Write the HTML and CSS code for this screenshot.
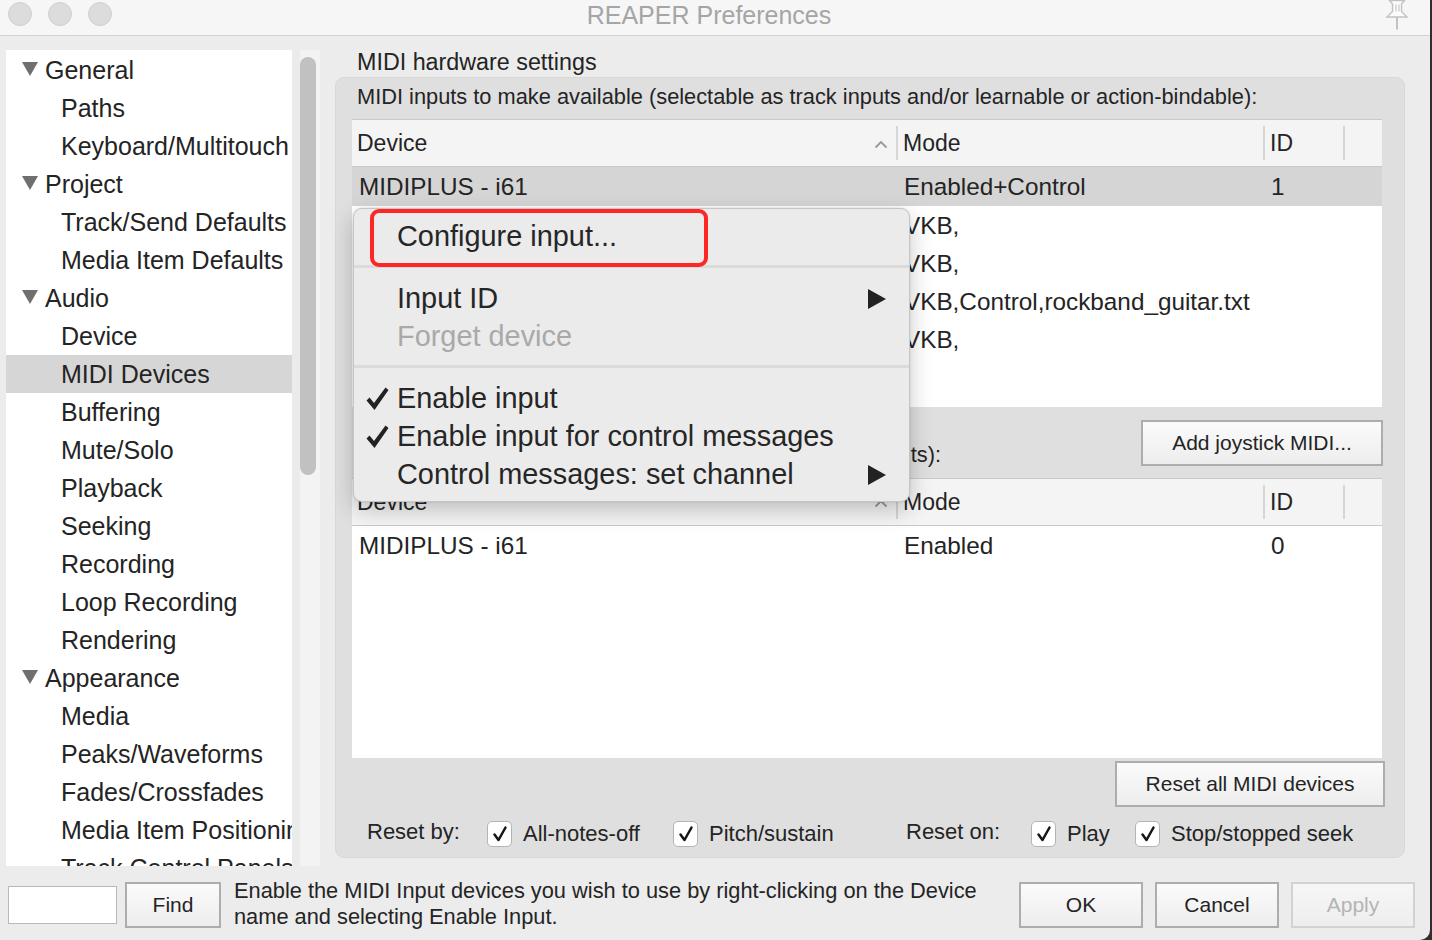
FILE: index.html
```html
<!DOCTYPE html>
<html>
<head>
<meta charset="utf-8">
<title>REAPER Preferences</title>
<link rel="stylesheet" href="styles.css">
</head>
<body>
<div class="window">
  <div class="titlebar">
    <div class="lights"><span class="light"></span><span class="light"></span><span class="light"></span></div>
    <div class="title">REAPER Preferences</div>
    <div class="pin">
      <svg width="30" height="30" viewBox="0 0 30 30"><path d="M7.5 0.5 H22.5 L19.5 4 V11.5 L25 17 H5 L10.5 11.5 V4 Z" fill="#fbfbfb" stroke="#c2c2c2" stroke-width="1.4"/><path d="M14 4.5 V11.5 M17 4.5 V11.5" stroke="#d0d0d0" stroke-width="1.4"/><path d="M15 17 V29.5" stroke="#c2c2c2" stroke-width="2"/></svg>
    </div>
  </div>

  <div class="main">
    <div class="sidebar">
      <div class="tree">
        <div class="node parent"><span class="tri"></span>General</div>
        <div class="node">Paths</div>
        <div class="node">Keyboard/Multitouch</div>
        <div class="node parent"><span class="tri"></span>Project</div>
        <div class="node">Track/Send Defaults</div>
        <div class="node">Media Item Defaults</div>
        <div class="node parent"><span class="tri"></span>Audio</div>
        <div class="node">Device</div>
        <div class="node selected">MIDI Devices</div>
        <div class="node">Buffering</div>
        <div class="node">Mute/Solo</div>
        <div class="node">Playback</div>
        <div class="node">Seeking</div>
        <div class="node">Recording</div>
        <div class="node">Loop Recording</div>
        <div class="node">Rendering</div>
        <div class="node parent"><span class="tri"></span>Appearance</div>
        <div class="node">Media</div>
        <div class="node">Peaks/Waveforms</div>
        <div class="node">Fades/Crossfades</div>
        <div class="node">Media Item Positioning</div>
        <div class="node">Track Control Panels</div>
      </div>
      <div class="scrolltrack"><div class="thumb"></div></div>
    </div>

    <div class="content">
      <div class="section-title">MIDI hardware settings</div>
      <div class="group">
        <div class="label first">MIDI inputs to make available (selectable as track inputs and/or learnable or action-bindable):</div>
        <div class="table t1">
          <div class="thead">
            <div class="th dev">Device<svg class="caret" width="14" height="9" viewBox="0 0 14 9"><path d="M1.5 7.5 L7 2 L12.5 7.5" fill="none" stroke="#9a9a9a" stroke-width="1.8"/></svg></div>
            <div class="th sep">Mode</div>
            <div class="th sep">ID</div>
            <div class="th sep"></div>
          </div>
          <div class="tr sel"><div class="td">MIDIPLUS - i61</div><div class="td">Enabled+Control</div><div class="td">1</div><div class="td"></div></div>
          <div class="tr"><div class="td"></div><div class="td">VKB,</div><div class="td"></div><div class="td"></div></div>
          <div class="tr"><div class="td"></div><div class="td">VKB,</div><div class="td"></div><div class="td"></div></div>
          <div class="tr"><div class="td"></div><div class="td">VKB,Control,rockband_guitar.txt</div><div class="td"></div><div class="td"></div></div>
          <div class="tr"><div class="td"></div><div class="td">VKB,</div><div class="td"></div><div class="td"></div></div>
        </div>
        <div class="midrow">
          <div class="label">MIDI outputs to make available (selectable as track outputs):</div>
          <button class="btn joy">Add joystick MIDI...</button>
        </div>
        <div class="table t2">
          <div class="thead">
            <div class="th dev">Device<svg class="caret" width="14" height="9" viewBox="0 0 14 9"><path d="M1.5 7.5 L7 2 L12.5 7.5" fill="none" stroke="#9a9a9a" stroke-width="1.8"/></svg></div>
            <div class="th sep">Mode</div>
            <div class="th sep">ID</div>
            <div class="th sep"></div>
          </div>
          <div class="tr"><div class="td">MIDIPLUS - i61</div><div class="td">Enabled</div><div class="td">0</div><div class="td"></div></div>
        </div>
        <div class="resetrow"><button class="btn resetall">Reset all MIDI devices</button></div>
        <div class="checks">
          <span class="clabel by">Reset by:</span>
          <label class="chk w1"><span class="box"><svg width="18" height="18" viewBox="0 0 18 18"><path d="M3.5 9.5 L7.5 15 L14.5 2.5" fill="none" stroke="#151515" stroke-width="2.5" stroke-linejoin="round" stroke-linecap="round"/></svg></span>All-notes-off</label>
          <label class="chk w2"><span class="box"><svg width="18" height="18" viewBox="0 0 18 18"><path d="M3.5 9.5 L7.5 15 L14.5 2.5" fill="none" stroke="#151515" stroke-width="2.5" stroke-linejoin="round" stroke-linecap="round"/></svg></span>Pitch/sustain</label>
          <span class="clabel on">Reset on:</span>
          <label class="chk w3"><span class="box"><svg width="18" height="18" viewBox="0 0 18 18"><path d="M3.5 9.5 L7.5 15 L14.5 2.5" fill="none" stroke="#151515" stroke-width="2.5" stroke-linejoin="round" stroke-linecap="round"/></svg></span>Play</label>
          <label class="chk"><span class="box"><svg width="18" height="18" viewBox="0 0 18 18"><path d="M3.5 9.5 L7.5 15 L14.5 2.5" fill="none" stroke="#151515" stroke-width="2.5" stroke-linejoin="round" stroke-linecap="round"/></svg></span>Stop/stopped seek</label>
        </div>
      </div>
    </div>
  </div>

  <div class="bottombar">
    <input class="search" type="text">
    <button class="btn find">Find</button>
    <div class="help">Enable the MIDI Input devices you wish to use by right-clicking on the Device<br>name and selecting Enable Input.</div>
    <div class="actions">
      <button class="btn act">OK</button>
      <button class="btn act">Cancel</button>
      <button class="btn act disabled">Apply</button>
    </div>
  </div>

  <div class="menu">
    <div class="hl"></div>
    <div class="mi"><span class="mcheck"></span><span class="mtext">Configure input...</span></div>
    <div class="msep"></div>
    <div class="mi"><span class="mcheck"></span><span class="mtext">Input ID</span><svg class="arrow" width="18" height="20" viewBox="0 0 18 20"><path d="M0 0 L18 10 L0 20 Z" fill="#222"/></svg></div>
    <div class="mi dis"><span class="mcheck"></span><span class="mtext">Forget device</span></div>
    <div class="msep"></div>
    <div class="mi"><span class="mcheck"><svg width="23" height="24" viewBox="0 0 23 24"><path d="M0.5 13.5 L3.5 10.5 L8 16 L19.5 0.5 L22.5 3 L8.5 23 Z" fill="#222"/></svg></span><span class="mtext">Enable input</span></div>
    <div class="mi"><span class="mcheck"><svg width="23" height="24" viewBox="0 0 23 24"><path d="M0.5 13.5 L3.5 10.5 L8 16 L19.5 0.5 L22.5 3 L8.5 23 Z" fill="#222"/></svg></span><span class="mtext">Enable input for control messages</span></div>
    <div class="mi"><span class="mcheck"></span><span class="mtext">Control messages: set channel</span><svg class="arrow" width="18" height="20" viewBox="0 0 18 20"><path d="M0 0 L18 10 L0 20 Z" fill="#222"/></svg></div>
  </div>
</div>
</body>
</html>
```

FILE: styles.css
```css
* { box-sizing: border-box; }
html, body { margin: 0; padding: 0; }
body {
  width: 1432px;
  height: 940px;
  overflow: hidden;
  background: #2e2e2e;
  font-family: "Liberation Sans", Arial, sans-serif;
  color: #242424;
}
.window {
  position: relative;
  width: 1430px;
  height: 940px;
  background: #ececec;
  display: flex;
  flex-direction: column;
  border-bottom-right-radius: 10px;
  overflow: hidden;
}

/* title bar */
.titlebar {
  height: 36px;
  flex: none;
  background: #f6f6f6;
  border-bottom: 1px solid #d2d2d2;
  display: grid;
  grid-template-columns: 1fr auto 1fr;
  align-items: start;
}
.lights { display: flex; gap: 16px; padding: 2px 0 0 8px; }
.light {
  width: 24px; height: 24px; border-radius: 50%;
  background: #dcdcdc; border: 1px solid #cfcfcf;
}
.title {
  font-size: 25px; line-height: 30px; color: #a5a5a5;
  padding-right: 12px;
}
.pin { justify-self: end; padding-right: 18px; height: 30px; }
.pin svg { display: block; }

/* main */
.main {
  height: 834px;
  flex: none;
  display: flex;
  padding: 14px 0 0 6px;
}
.sidebar { display: flex; height: 816px; width: 314px; flex: none; }
.tree {
  width: 286px;
  height: 816px;
  background: #fff;
  overflow: hidden;
  padding-top: 1px;
}
.node {
  height: 38px;
  line-height: 39px;
  font-size: 25px;
  padding-left: 55px;
  padding-right: 3px;
  white-space: nowrap;
  overflow: hidden;
  color: #242424;
}
.node.parent { padding-left: 16px; display: flex; align-items: center; }
.node.selected { background: #d6d6d6; }
.tri {
  width: 0; height: 0;
  border-left: 8px solid transparent;
  border-right: 8px solid transparent;
  border-top: 14px solid #6f6f6f;
  margin-right: 7px;
  margin-top: -3px;
}
.scrolltrack {
  width: 28px; height: 816px;
  background: linear-gradient(90deg, #ebebeb 0 8px, #f3f3f3 8px);
  padding: 7px 4px 0 8px;
}
.thumb {
  width: 16px; height: 418px;
  background: #c1c1c1;
  border-radius: 8px;
}

.content { margin-left: 15px; width: 1070px; }
.section-title { font-size: 23.3px; line-height: 25px; padding-left: 22px; height: 24px; }
.group {
  margin-top: 3px;
  height: 781px;
  background: #dfdfdf;
  border: 1px solid #d8d8d8;
  border-radius: 9px;
  padding: 8px 22px 0 16px;
}
.label { font-size: 21.8px; line-height: 22px; padding-left: 5px; white-space: nowrap; }
.label.first { margin-bottom: 11px; }

.table {
  background: #fff;
  border-top: 1px solid #c9c9c9;
  overflow: hidden;
}
.t1 { height: 288px; }
.t2 { height: 280px; }
.thead {
  height: 47px;
  display: grid;
  grid-template-columns: 544px 367px 80px 1fr;
  background: #f4f4f4;
  border-bottom: 1px solid #c9c9c9;
}
.th {
  font-size: 23px;
  line-height: 46px;
  padding-left: 6px;
  white-space: nowrap;
}
.th.dev { padding-left: 5px; display: flex; align-items: center; justify-content: space-between; padding-right: 8px; }
.th.sep {
  background: linear-gradient(#d6d6d6, #d6d6d6) left center / 2px 34px no-repeat;
  padding-left: 7px;
}
.caret { display: block; margin-top: 2px; }
.tr {
  height: 38px;
  display: grid;
  grid-template-columns: 544px 367px 80px 1fr;
}
.tr.sel { background: #d5d5d5; height: 39px; }
.td {
  font-size: 24.3px;
  line-height: 40px;
  padding-left: 8px;
  padding-right: 6px;
  white-space: nowrap;
  overflow: hidden;
}
.td:first-child { padding-left: 7px; }

.midrow {
  height: 71px;
  display: flex;
  align-items: flex-end;
  justify-content: space-between;
  padding-bottom: 12px;
}
.btn {
  font-family: "Liberation Sans", Arial, sans-serif;
  font-size: 21px;
  color: #242424;
  height: 46px;
  border: 2px solid #adadad;
  background: linear-gradient(#fbfbfb, #ededed);
  border-radius: 0;
  padding: 0;
}
.joy { width: 242px; margin-right: -1px; }
.resetrow { display: flex; justify-content: flex-end; margin-top: 3px; }
.resetall { width: 270px; margin-right: -3px; }

.checks {
  display: flex;
  align-items: center;
  height: 51px;
  padding: 3px 0 0 15px;
  font-size: 22px;
}
.clabel { display: inline-block; margin-top: -5px; }
.clabel.by { width: 120px; }
.clabel.on { width: 125px; }
.chk { display: flex; align-items: center; gap: 11px; }
.chk.w1 { width: 186px; }
.chk.w2 { width: 233px; }
.chk.w3 { width: 104px; }
.box {
  width: 25px; height: 26px;
  background: #fff;
  border: 1px solid #b4b4b4;
  border-radius: 5px;
  display: flex; align-items: center; justify-content: center;
}
.box svg { display: block; }

/* bottom bar */
.bottombar {
  flex: 1;
  display: flex;
  align-items: center;
  padding: 0 15px 0 8px;
}
.search {
  width: 109px; height: 38px;
  border: 1px solid #b9b9b9;
  background: #fff;
  margin: 0;
}
.find { width: 96px; margin-left: 8px; }
.help { font-size: 21.8px; line-height: 26px; margin-left: 13px; white-space: nowrap; margin-top: -2px; }
.actions { margin-left: auto; display: flex; gap: 12px; }
.act { width: 124px; }
.act.disabled { color: #b4b4b4; border-color: #d2d2d2; background: linear-gradient(#f6f6f6, #eeeeee); }

/* context menu (overlay) */
.menu {
  position: absolute;
  left: 353px;
  top: 208px;
  width: 557px;
  height: 294px;
  background: #ebebeb;
  border: 1px solid #c6c6c6;
  border-radius: 9px;
  box-shadow: 0 8px 22px rgba(0, 0, 0, 0.22), 0 0 2px rgba(0,0,0,0.15);
  padding: 8px 0;
}
.hl {
  position: absolute;
  left: 16px;
  top: 0px;
  width: 338px;
  height: 58px;
  border: 4px solid #ff2626;
  border-radius: 9px;
}
.mi {
  height: 38px;
  display: flex;
  align-items: center;
  font-size: 28.9px;
  color: #262626;
  padding-right: 23px;
  padding-top: 1px;
}
.mi.dis { color: #a9a9a9; }
.mcheck { width: 43px; padding-left: 12px; display: flex; align-items: center; flex: none; }
.mcheck svg { display: block; }
.mtext { flex: 1; white-space: nowrap; }
.arrow { display: block; flex: none; }
.msep { height: 3px; background: #dadada; margin: 10px 0 11px; }
```
